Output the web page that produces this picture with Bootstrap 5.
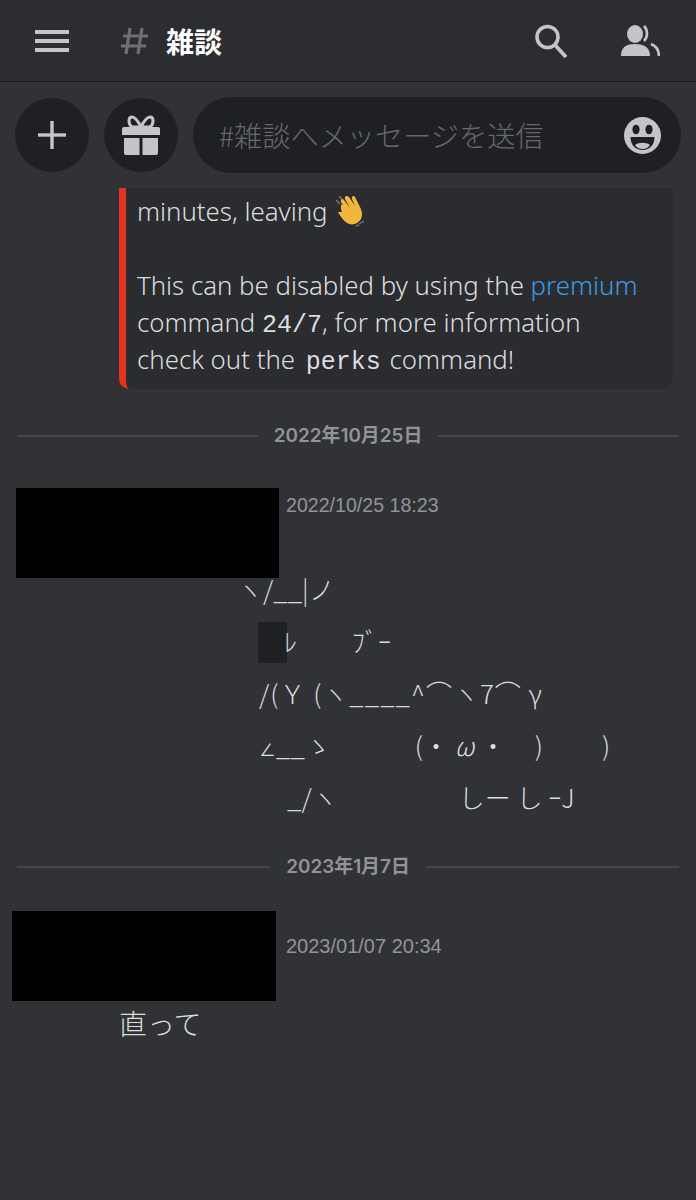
<!DOCTYPE html>
<html lang="ja">
<head>
    <meta charset="UTF-8">
    <meta name="viewport" content="width=device-width, initial-scale=1.0">
    <title>雑談</title>
    <link href="https://cdn.jsdelivr.net/npm/bootstrap@5.3.0/dist/css/bootstrap.min.css" rel="stylesheet">
    <style>
        body {
            background-color: #313236;
            color: #dcddde;
            font-family: "Noto Sans", "Noto Sans CJK JP", sans-serif;
        }
        .app-header {
            height: 82px;
            background-color: #2c2d31;
            border-bottom: 1px solid #1b1c1f;
            padding: 0 36px 0 35px;
        }
        .hash-mark {
            margin-left: 52px;
            margin-right: 18px;
        }
        .channel-title {
            font-family: "Noto Sans CJK JP", sans-serif;
            font-size: 28px;
            font-weight: 700;
            color: #fff;
            line-height: 1;
        }
        .users-icon {
            margin-left: 53px;
        }
        .composer {
            padding: 15px 15px 0 15px;
            gap: 15px;
            height: 106px;
        }
        .round-btn {
            width: 74px;
            height: 74px;
            margin-top: 1px;
            background-color: #1f2023;
            flex: none;
        }
        .msg-input {
            height: 76px;
            width: 488px;
            border-radius: 38px;
            background-color: #1f2023;
            padding: 0 20px 0 26px;
            color: #66686d;
            font-family: "Noto Sans CJK JP", sans-serif;
            font-size: 28.2px;
            font-weight: 300;
        }
        .embed-box {
            margin-left: 119px;
            width: 554px;
            height: 201px;
            background-color: #2b2c30;
            border-left: 7px solid #e5321f;
            border-radius: 0 0 12px 10px;
            padding: 5px 0 0 11px;
            font-size: 25.8px;
            font-weight: 300;
            line-height: 37px;
            white-space: nowrap;
        }
        .embed-link {
            color: #3f9ae0;
            text-decoration: none;
        }
        .embed-code {
            font-family: "Liberation Mono", monospace;
            font-size: 25px;
            line-height: 1;
            color: #dcddde;
        }
        .embed-code-spaced {
            margin-left: 4px;
            margin-right: 2px;
        }
        .wave-icon {
            vertical-align: -6px;
        }
        .day-row {
            padding: 0 17px;
            gap: 16px;
            font-family: "Inter", "Noto Sans CJK JP", sans-serif;
            font-size: 18.9px;
            font-weight: 600;
            color: #929499;
            line-height: 24px;
        }
        .day-row hr {
            flex: 1;
            margin: 0;
            border: 0;
            height: 2px;
            background-color: #45474b;
            opacity: 1;
        }
        .day-first {
            margin-top: 35px;
        }
        .day-second {
            margin-top: 32px;
        }
        .msg-head {
            gap: 7px;
        }
        .msg-head-first {
            margin: 40px 0 0 16px;
        }
        .msg-head-second {
            margin: 32px 0 0 12px;
        }
        .redact-box {
            width: 263px;
            height: 90px;
            background-color: #000;
        }
        .redact-wide {
            width: 264px;
        }
        .msg-time {
            font-family: "Liberation Sans", sans-serif;
            font-size: 19.6px;
            color: #929499;
            margin-top: 5px;
            line-height: 24px;
        }
        .msg-time-low {
            font-size: 20px;
            margin-top: 23px;
            margin-left: 3px;
        }
        .kao-block {
            font-family: "Noto Sans CJK JP", sans-serif;
            font-weight: 300;
            font-size: 26px;
            line-height: 52px;
            margin: -15px 0 0 243px;
        }
        .kao-line {
            height: 52px;
            white-space: pre;
        }
        .kao-top {
            margin-left: -6px;
        }
        .kao-ind {
            margin-left: 16px;
        }
        .kao-spread {
            letter-spacing: 1px;
        }
        .kao-ind-2 {
            margin-left: 44px;
        }
        .kao-shade {
            display: inline-block;
            width: 29px;
            height: 41px;
            margin: 0 -3px 5px 15px;
            vertical-align: middle;
            background-color: #1f2023;
        }
        .kao-angle {
            font-family: "DejaVu Sans", sans-serif;
            font-size: 20px;
        }
        .kao-gap-a { margin-left: 55px; }
        .kao-gap-b { margin-left: 84px; }
        .kao-gap-c { margin-left: 121px; }
        .kao-gap-d { margin-left: 59px; }
        .plain-msg {
            margin-left: 119px;
            margin-top: 3px;
            font-family: "Noto Sans CJK JP", sans-serif;
            font-weight: 300;
            font-size: 28px;
            line-height: 38px;
        }
    </style>
</head>
<body>
    <!-- Top bar -->
    <header class="app-header d-flex align-items-center">
        <svg width="34" height="24" viewBox="0 0 34 24" fill="#c3c5ca"><rect y="1" width="34" height="4"/><rect y="10" width="34" height="4"/><rect y="19" width="34" height="4"/></svg>
        <svg class="hash-mark" width="27" height="28" viewBox="0 0 27 28" fill="none" stroke="#6d6f74" stroke-width="3.2"><path d="M9 1 5 27M21 1l-4 26M2 9h25M0 19h25"/></svg>
        <span class="channel-title">雑談</span>
        <svg class="ms-auto" width="33" height="34" viewBox="0 0 33 34" fill="none" stroke="#c3c5ca"><circle cx="12.500" cy="13" r="10.500" stroke-width="3.600"/><path d="M20 21 31 33" stroke-width="3.800"/></svg>
        <svg class="users-icon" width="39" height="32" viewBox="0 0 39 32" fill="#c3c5ca"><ellipse cx="14" cy="9" rx="8" ry="9"/><path d="M0 31c0-8 4-12 14-12s15 4 15 12z"/><path d="M23 1c4 4 4 11 0 15M30 19c5 2 8 6 8 12" fill="none" stroke="#c3c5ca" stroke-width="2.600"/></svg>
    </header>

    <!-- Message box -->
    <div class="composer d-flex align-items-start">
        <div class="round-btn rounded-circle d-flex align-items-center justify-content-center">
            <svg width="28" height="28" viewBox="0 0 28 28" fill="#c3c5ca"><rect x="12.300" width="3.400" height="28"/><rect y="12.300" width="28" height="3.400"/></svg>
        </div>
        <div class="round-btn rounded-circle d-flex align-items-center justify-content-center">
            <svg width="38" height="40" viewBox="0 0 38 40" fill="#c3c5ca"><path d="M19 12C16 6 13 2 10 2 6 2 6 9 10 12zM19 12c3-6 6-10 9-10 4 0 4 7 0 10z" fill="none" stroke="#c3c5ca" stroke-width="3"/><path d="M2 12h34q2 0 2 2v6H0v-6q0-2 2-2zM2 23h15.500v17H4q-2 0-2-2zM20.500 23H36v15q0 2-2 2H20.500z"/></svg>
        </div>
        <div class="msg-input d-flex align-items-center justify-content-between">
            <span>#雑談へメッセージを送信</span>
            <svg width="37" height="37" viewBox="0 0 37 37"><circle cx="18.500" cy="18.500" r="18.500" fill="#c3c5ca"/><ellipse cx="12" cy="12.500" rx="3.600" ry="4.800" fill="#1f2023"/><ellipse cx="25" cy="12.500" rx="3.600" ry="4.800" fill="#1f2023"/><path d="M6.500 20h24c0 8-5 13-12 13s-12-5-12-13z" fill="#1f2023"/><path d="M11 28c4-3 11-3 15 0-2 3-5 4-7.500 4s-5.500-1-7.500-4z" fill="#c3c5ca"/></svg>
        </div>
    </div>

    <!-- Bot embed, cut off by the scroll -->
    <div class="embed-box">
        <div>minutes, leaving
            <svg class="wave-icon" width="34" height="32" viewBox="0 0 34 32"><path d="M2 5 6 9M5 1l3 3M25 29l5-3M22 31l3-1" stroke="#777a80" stroke-width="1.400" fill="none"/><path d="M8 17C6 12 7 8 9 10l3 5-5-8c-1-3 2-4 3-2l6 8-5-9c-1-3 2-4 4-2l6 9-3-7c-1-3 2-4 3-2l5 10c2 4 3 8 1 12-3 5-9 7-14 4-3-2-7-7-9-11z" fill="#f3b63c"/></svg>
        </div>
        <div>&nbsp;</div>
        <div>This can be disabled by using the <a class="embed-link" href="#">premium</a></div>
        <div>command <span class="embed-code">24/7</span>, for more information</div>
        <div>check out the <span class="embed-code embed-code-spaced">perks</span> command!</div>
    </div>

    <div class="day-row day-first d-flex align-items-center">
        <hr><span>2022年10月25日</span><hr>
    </div>

    <div class="msg-head msg-head-first d-flex align-items-start">
        <div class="redact-box"></div>
        <span class="msg-time">2022/10/25 18:23</span>
    </div>
    <div class="kao-block">
        <div class="kao-line kao-top">ヽ/__|ノ</div>
        <div class="kao-line"><span class="kao-shade"></span>ﾚ<span class="kao-gap-a">ﾌﾞｰ</span></div>
        <div class="kao-line kao-ind kao-spread">/(Ｙ (ヽ____^⌒ヽ7⌒ γ</div>
        <div class="kao-line kao-ind"><span class="kao-angle">∠</span>__ゝ<span class="kao-gap-b">(・ <span class="fst-italic">ω</span> ・     )</span><span class="kao-gap-d">)</span></div>
        <div class="kao-line kao-ind-2">_/ヽ<span class="kao-gap-c">しー し ｰJ</span></div>
    </div>

    <div class="day-row day-second d-flex align-items-center">
        <hr><span>2023年1月7日</span><hr>
    </div>

    <div class="msg-head msg-head-second d-flex align-items-start">
        <div class="redact-box redact-wide"></div>
        <span class="msg-time msg-time-low">2023/01/07 20:34</span>
    </div>
    <div class="plain-msg">直って</div>

    <script src="https://cdn.jsdelivr.net/npm/bootstrap@5.3.0/dist/js/bootstrap.bundle.min.js"></script>
</body>
</html>
